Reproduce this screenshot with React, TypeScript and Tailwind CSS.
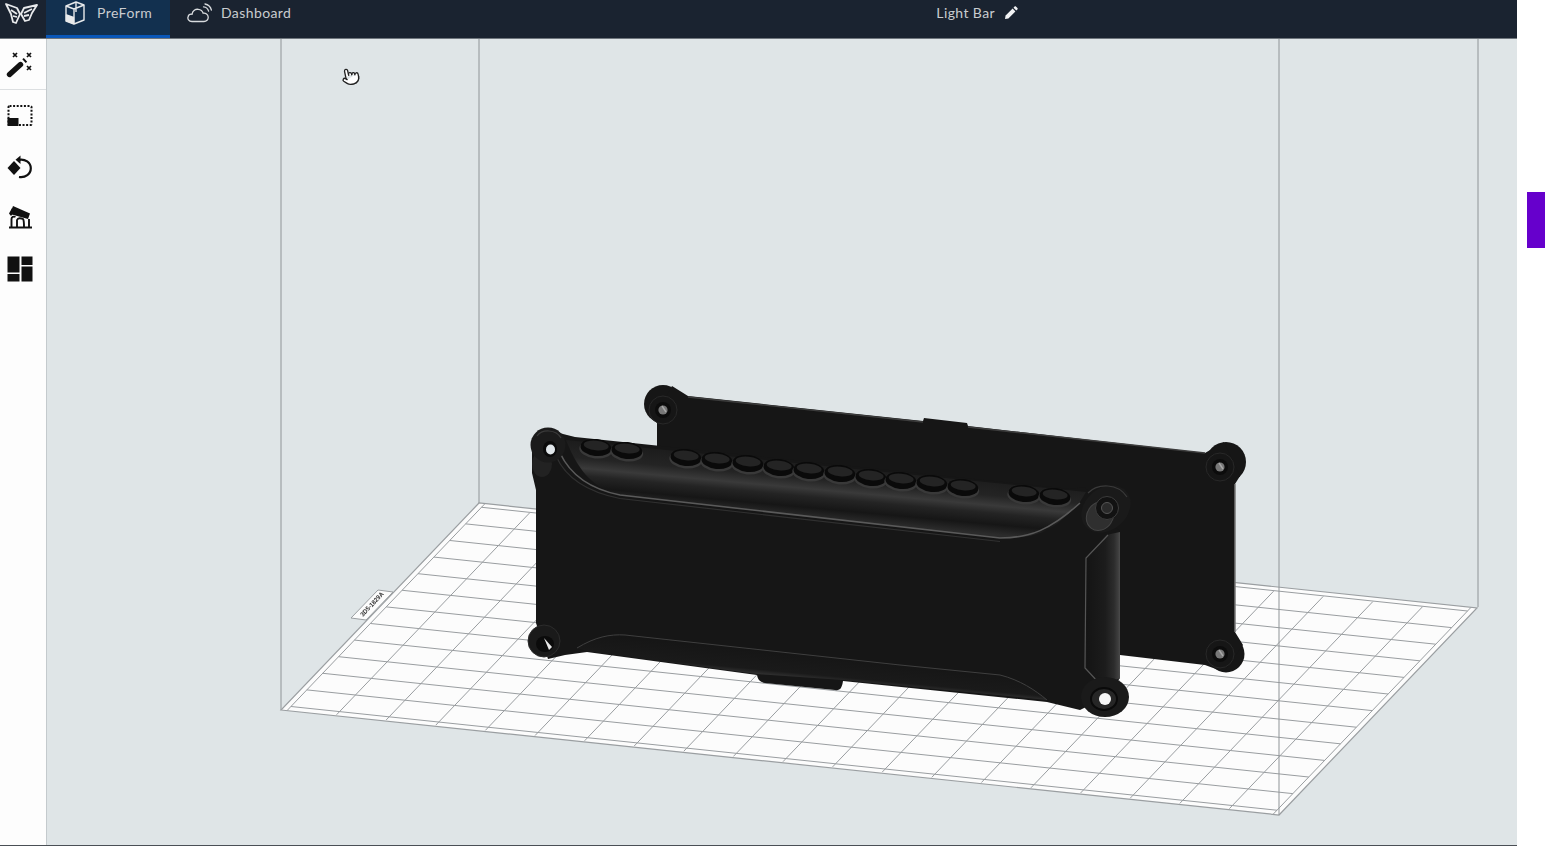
// PreForm viewport: top bar, tool rail, and the build volume with two parts on the grid.
import { Pointer } from "lucide-react";

const FONT = "font-['Lato','Open_Sans',sans-serif]";

// build platform corners, page coordinates
const FL = [281, 710];
const FR = [1279, 815];
const BL = [479, 503];

const floorPoint = (s: number, t: number) => [
  FL[0] + (FR[0] - FL[0]) * s + (BL[0] - FL[0]) * t,
  FL[1] + (FR[1] - FL[1]) * s + (BL[1] - FL[1]) * t,
];

const ROWS = Array.from({ length: 13 }, (_, j) => 0.02 + 0.0802 * j);
const COLS = Array.from({ length: 19 }, (_, k) => (5 + 49.6 * (k + 1)) / 998);

const BUMPS = [
  [596, 447], [627, 450], [686, 457], [717, 460], [748, 463], [779, 467], [809, 470],
  [840, 473], [871, 477], [901, 480], [932, 483], [963, 487], [1024, 493], [1055, 496],
];

function Logo() {
  return (
    <svg width="34" height="24" viewBox="0 0 34 24" fill="none" stroke="#e8eaec" strokeWidth="1.8" strokeLinejoin="round">
      <path d="M2 2 L13 6 L16 12 L12 21 L9 20 L7 12 Z" />
      <path d="M33 3 L20 6 L17 12 L21 19 L25 18 L28 11 Z" />
      <path d="M7 8 L13 12 M9 14 L13 15 M28 7 L20 11 M25 13 L20 14" />
    </svg>
  );
}

function PrinterIcon() {
  return (
    <svg width="20" height="24" viewBox="0 0 20 24" fill="none" stroke="#e8eaec" strokeWidth="1.4" strokeLinejoin="round">
      <path d="M1 5 L11 1 L19 4 L19 19 L9 23 L1 20 Z" />
      <path d="M1 5 L9 8 L19 4 M9 8 L9 23 M11 1 L11 11" />
      <path d="M1.5 14 L8.5 16.5 L8.5 22.5 L1.5 19.5 Z" fill="#e8eaec" />
    </svg>
  );
}

function CloudIcon() {
  return (
    <svg width="25" height="20" viewBox="0 0 25 20" fill="none" stroke="#d8dbde" strokeWidth="1.3" strokeLinecap="round">
      <path d="M5 18.5 C1.5 18.5 0.5 15.8 1 14 C1.5 12 3.4 11 5 11.3 C5.6 7.8 8.5 6 11.2 6.3 C13.8 6.6 15.6 8.3 16.2 10.2 C18.6 9.8 21 11.3 21.2 14 C21.4 16.8 19.4 18.5 17 18.5 Z" />
      <path d="M16.5 3.8 C19 4 21 5.8 21.6 8.2 M18 1 C21 1.6 23.6 3.8 24.4 7" />
    </svg>
  );
}

function PencilIcon() {
  return (
    <svg width="14" height="14" viewBox="0 0 14 14" fill="#f2f3f4">
      <path d="M1 13 L1.6 9.6 L8.6 2.6 L11.4 5.4 L4.4 12.4 Z" />
      <path d="M9.5 1.7 L10.6 0.6 C11 0.2 11.5 0.2 11.9 0.6 L13.4 2.1 C13.8 2.5 13.8 3 13.4 3.4 L12.3 4.5 Z" />
    </svg>
  );
}

function WandIcon() {
  return (
    <svg width="30" height="30" viewBox="0 0 30 30" fill="none" stroke="#111" strokeLinecap="round">
      <path d="M4.5 25.5 L15.5 15.5" strokeWidth="5.4" />
      <path d="M19 12.2 L20.5 10.8" strokeWidth="5" strokeLinecap="butt" />
      <path d="M8 4 L12 8 M12 4 L8 8 M22 4 L26 8 M26 4 L22 8 M22 17 L26 21 M26 17 L22 21" strokeWidth="1.7" strokeLinecap="butt" />
    </svg>
  );
}

function SelectIcon() {
  return (
    <svg width="30" height="30" viewBox="0 0 30 30" fill="none">
      <rect x="3.5" y="5" width="23" height="19" rx="1" stroke="#111" strokeWidth="2" strokeDasharray="2 1.6" />
      <rect x="2.5" y="17" width="11" height="8" fill="#111" />
    </svg>
  );
}

function RotateIcon() {
  return (
    <svg width="30" height="30" viewBox="0 0 30 30" fill="none">
      <path d="M9 9 L15.5 16 L9 23 L2.5 16 Z" fill="#111" />
      <path d="M14 7.8 C20 6.6 25.8 10.6 25.8 16.3 C25.8 22 20.5 26 14 25" stroke="#111" strokeWidth="2.2" />
      <path d="M15.5 3.5 L15.5 12 L10.5 7.8 Z" fill="#111" />
    </svg>
  );
}

function SupportIcon() {
  return (
    <svg width="30" height="30" viewBox="0 0 30 30" fill="none">
      <path d="M8 3 L25 10.5 L23 16 L5 11 Z" fill="#111" />
      <path d="M7 5 L4 10.5 L6 13 L10 8 Z" fill="#111" />
      <path d="M4 24.5 L27 24.5" stroke="#111" strokeWidth="2" />
      <path d="M6.5 24 L6.5 16 C6.5 14 8.5 13 10.5 14 M12 24 L12 17 C13 14.5 16 15 18 16 C19 17 19 18 19 24 M24 24 L24 16" stroke="#111" strokeWidth="1.9" />
    </svg>
  );
}

function LayoutIcon() {
  return (
    <svg width="30" height="30" viewBox="0 0 30 30" fill="#111">
      <rect x="2.5" y="2.5" width="12" height="16" />
      <rect x="2.5" y="20" width="12" height="7.5" />
      <rect x="16.5" y="2.5" width="11" height="8.5" />
      <rect x="16.5" y="12.5" width="11" height="15" />
    </svg>
  );
}

function Bump({ x, y }: { x: number; y: number }) {
  return (
    <g transform={`rotate(6 ${x} ${y})`}>
      <ellipse cx={x} cy={y + 2.5} rx="16.5" ry="9" fill="#393939" />
      <ellipse cx={x} cy={y + 0.5} rx="15.5" ry="8.5" fill="#0a0a0a" />
      <ellipse cx={x} cy={y - 1.5} rx="12.5" ry="4.8" fill="#242424" />
    </g>
  );
}

function Bolt({ x, y }: { x: number; y: number }) {
  return (
    <g>
      <circle cx={x} cy={y} r="14" fill="#161616" stroke="#282828" strokeWidth="1" />
      <circle cx={x} cy={y} r="8" fill="#0c0c0c" />
      <circle cx={x} cy={y} r="4.6" fill="#777" />
      <path d={`M${x - 1} ${y - 4} L${x + 3} ${y + 2}`} stroke="#a8a8a8" strokeWidth="1.4" />
    </g>
  );
}

function Scene() {
  const corners = [floorPoint(0, 0), floorPoint(1, 0), floorPoint(1, 1), floorPoint(0, 1)];
  return (
    <svg className="block h-full w-full blur-[0.4px]" viewBox="47 39 1470 806" preserveAspectRatio="none">
      <defs>
        <linearGradient id="topFace" gradientUnits="userSpaceOnUse" x1="620" y1="445" x2="615" y2="500">
          <stop offset="0" stopColor="#1c1c1c" />
          <stop offset="0.3" stopColor="#242424" />
          <stop offset="0.48" stopColor="#3a3a3a" />
          <stop offset="0.62" stopColor="#242424" />
          <stop offset="0.82" stopColor="#161616" />
          <stop offset="1" stopColor="#2b2b2b" />
        </linearGradient>
        <linearGradient id="sideFace" gradientUnits="userSpaceOnUse" x1="1086" y1="600" x2="1121" y2="600">
          <stop offset="0" stopColor="#141414" />
          <stop offset="0.55" stopColor="#1c1c1c" />
          <stop offset="0.8" stopColor="#2c2c2c" />
          <stop offset="0.92" stopColor="#3e3e3e" />
          <stop offset="1" stopColor="#545454" />
        </linearGradient>
        <linearGradient id="lowerFace" gradientUnits="userSpaceOnUse" x1="800" y1="650" x2="797" y2="682">
          <stop offset="0" stopColor="#151515" />
          <stop offset="0.72" stopColor="#1a1a1a" />
          <stop offset="1" stopColor="#464646" />
        </linearGradient>
      </defs>

      {/* back edges of the volume */}
      <path d="M479 39 L479 503 M1478 39 L1478 607 M281 39 L281 710" stroke="#8f9497" strokeWidth="1" fill="none" />

      {/* platform */}
      <polygon points={corners.map((p) => p.join(",")).join(" ")} fill="#fcfcfc" stroke="#9a9ea1" strokeWidth="1.2" />
      <g stroke="#999da0" strokeWidth="1" fill="none">
        {ROWS.map((t) => {
          const a = floorPoint(0.006, t);
          const b = floorPoint(0.994, t);
          return <line key={t} x1={a[0]} y1={a[1]} x2={b[0]} y2={b[1]} />;
        })}
        {COLS.map((s) => {
          const a = floorPoint(s, 0.005);
          const b = floorPoint(s, 0.98);
          return <line key={s} x1={a[0]} y1={a[1]} x2={b[0]} y2={b[1]} />;
        })}
        <line x1={floorPoint(0.006, 0)[0]} y1={floorPoint(0.006, 0)[1]} x2={floorPoint(0.006, 1)[0]} y2={floorPoint(0.006, 1)[1]} />
        <line x1={floorPoint(0.994, 0)[0]} y1={floorPoint(0.994, 0)[1]} x2={floorPoint(0.994, 1)[0]} y2={floorPoint(0.994, 1)[1]} />
      </g>

      {/* serial tab on the platform edge */}
      <polygon points="378,590 393,592 366,620 351,618" fill="#fcfcfc" stroke="#9a9ea1" strokeWidth="1" />
      <text x="0" y="0" transform="translate(363,617) rotate(-47)" fontSize="6.5" fontWeight="700" fill="#333" fontFamily="'Liberation Sans',sans-serif" textLength="31" lengthAdjust="spacingAndGlyphs">
        3D5-1829A
      </text>

      {/* back plate */}
      <circle cx="663" cy="404" r="19" fill="#161616" />
      <circle cx="1226" cy="462" r="20" fill="#161616" />
      <circle cx="1226" cy="654" r="18.5" fill="#161616" />
      <path d="M657 600 L657 415 L672 386 L688 396 L923 421 L924 418 L967 423 L968 426 L1205 453 L1224 442 L1240 476 L1235 484 L1235 632 L1243 645 L1224 672 L1205 665 L1120 655 Z" fill="#161616" />
      <path d="M688 397 L923 422 M968 427 L1205 453" stroke="#3c3c3c" strokeWidth="1.4" fill="none" />
      <path d="M1235 484 L1235 632" stroke="#777" strokeWidth="1.5" fill="none" />
      <Bolt x={663} y={410} />
      <Bolt x={1220} y={467} />
      <Bolt x={1220} y={654} />

      {/* front housing */}
      <path d="M548 428 L563 434 L575 437 L1070 489 L1085 487 L1120 532 L1120 678 L1106 697 L1080 710 L1047 702 L843 681 C842 688 840 691 835 690 L765 683 C760 682 758 680 757 675 L587 652 L565 655 L548 659 L536 623 L536 490 L532 473 L532 448 Z" fill="#161616" />
      <path d="M566 440 L1086 492 L1078 505 L1058 523 C1040 537 1020 538 1000 538 L620 495 C595 488 580 475 566 440 Z" fill="url(#topFace)" />
      <path d="M1086 560 L1106 535 L1120 532 L1120 678 L1108 684 L1100 683 L1087 668 Z" fill="url(#sideFace)" />
      <path d="M577 648 C595 637 610 634 625 635 L900 665 L1000 675 C1020 680 1035 690 1047 700 L843 680 L757 674 L587 651 Z" fill="url(#lowerFace)" />
      <path d="M560 453 C568 470 585 488 620 495 L1000 538 C1030 538 1050 530 1080 503" stroke="#5a5a5a" strokeWidth="1.6" fill="none" />
      <path d="M556 456 C564 474 582 491 620 498.5 L1000 541.5" stroke="#303030" strokeWidth="1.2" fill="none" />
      <path d="M1108 535 L1086 558 L1085 668 L1100 684" stroke="#555" strokeWidth="1.2" fill="none" />
      <path d="M577 648 C595 637 610 634 625 635 L900 665 L1000 675 C1020 680 1035 690 1047 700" stroke="#3f3f3f" strokeWidth="1" fill="none" />

      {BUMPS.map(([x, y]) => (
        <Bump key={x} x={x} y={y} />
      ))}

      {/* mounting ears, front housing */}
      <ellipse cx="542" cy="464" rx="10" ry="13" fill="#222" />
      <circle cx="548" cy="445" r="17.5" fill="#1b1b1b" />
      <path d="M537 436 C542 429 556 429 561 438" stroke="#3a3a3a" strokeWidth="1.2" fill="none" />
      <ellipse cx="550" cy="449" rx="7" ry="8" fill="#0b0b0b" />
      <ellipse cx="550.5" cy="449.5" rx="4.5" ry="5" fill="#e1e7ea" />

      <circle cx="544" cy="641" r="16" fill="#1a1a1a" stroke="#2c2c2c" strokeWidth="1" />
      <ellipse cx="545" cy="644" rx="9" ry="8" fill="#0b0b0b" />
      <path d="M544 638 L552 647 L549 650 Z" fill="#e8e8e8" />

      <ellipse cx="1106" cy="509" rx="27" ry="21" transform="rotate(-40 1106 509)" fill="#1a1a1a" />
      <path d="M1088 493 C1098 483 1118 483 1127 497" stroke="#3a3a3a" strokeWidth="1.2" fill="none" />
      <ellipse cx="1100" cy="516" rx="13" ry="15" transform="rotate(35 1100 516)" fill="#2f2f2f" stroke="#444" strokeWidth="1" />
      <circle cx="1107" cy="508" r="11.5" fill="#121212" stroke="#3c3c3c" strokeWidth="1" />
      <circle cx="1107" cy="508" r="5.5" fill="#2a2a2a" stroke="#555" strokeWidth="1" />

      <ellipse cx="1105" cy="697" rx="24" ry="20" fill="#1a1a1a" />
      <ellipse cx="1104" cy="699" rx="13" ry="11" fill="#262626" stroke="#0a0a0a" strokeWidth="2" />
      <circle cx="1105" cy="699" r="6" fill="#f7f7f7" />

      {/* front vertical of the volume sits over the platform */}
      <path d="M1279 39 L1279 815" stroke="#8f9497" strokeWidth="1" fill="none" />
    </svg>
  );
}

const TOOLS = [SelectIcon, RotateIcon, SupportIcon, LayoutIcon];

export default function App() {
  return (
    <div className={`flex h-[846px] w-full overflow-hidden bg-white ${FONT}`}>
      <div className="flex w-[1517px] flex-none flex-col border-b border-[#4a4f55]">
        <header className="flex h-[39px] flex-none items-stretch border-b border-[#6f767d] bg-[#1a2330] text-[14px] text-[#c9cccf]">
          <div className="flex w-[46px] flex-none items-center justify-center pb-[10px] pr-[5px]">
            <Logo />
          </div>
          <div className="flex w-[124px] flex-none items-center gap-[12px] border-b-[3px] border-[#0a57b8] bg-[#12304f] pb-[10px] pl-[19px]">
            <PrinterIcon />
            <span className="tracking-[0.45px]">PreForm</span>
          </div>
          <div className="flex items-center gap-[9px] pb-[13px] pl-[17px]">
            <CloudIcon />
            <span className="tracking-[0.4px]">Dashboard</span>
          </div>
          <div className="ml-[645px] flex items-center gap-[9px] pb-[13px]">
            <span className="tracking-[0.4px]">Light Bar</span>
            <PencilIcon />
          </div>
        </header>
        <div className="flex min-h-0 flex-1">
          <aside className="w-[47px] flex-none border-r border-[#c4cacd] bg-[#fdfdfd]">
            <div className="flex h-[51px] items-center justify-center border-b border-[#dcdfe1] pr-[6px]">
              <WandIcon />
            </div>
            {TOOLS.map((Icon, i) => (
              <div key={i} className="flex h-[51px] items-center justify-center pr-[6px]">
                <Icon />
              </div>
            ))}
          </aside>
          <main className="relative min-w-0 flex-1 bg-[#dfe5e7]">
            <Scene />
            <Pointer
              size={19}
              strokeWidth={1.7}
              className="absolute left-[294px] top-[28px] -rotate-12 fill-white text-[#222]"
            />
          </main>
        </div>
      </div>
      <div className="flex-1 pl-[10px] pt-[192px]">
        <div className="h-[56px] w-[18px] bg-[#6600cc]" />
      </div>
    </div>
  );
}
